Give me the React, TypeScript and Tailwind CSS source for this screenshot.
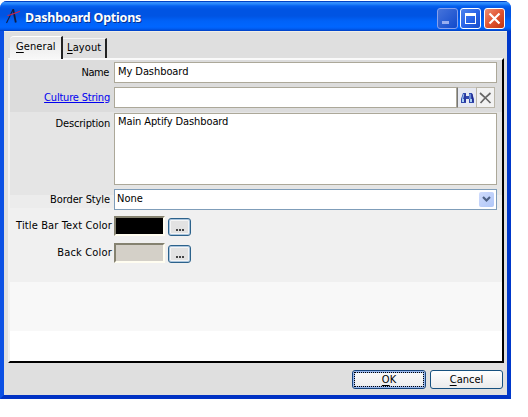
import React, { useState } from "react";

type LabelProps = {
  children: React.ReactNode;
  className?: string;
};

function Label({ children, className = "" }: LabelProps) {
  return (
    <div
      className={`flex w-[104px] shrink-0 justify-end whitespace-nowrap leading-[14px] ${className}`}
    >
      {children}
    </div>
  );
}

type ColorRowProps = {
  label: string;
  swatch: string;
  className: string;
  labelClass: string;
};

function ColorRow({ label, swatch, className, labelClass }: ColorRowProps) {
  return (
    <div className={`flex h-5 ${className}`}>
      <Label className={labelClass}>{label}</Label>
      <div
        className={`h-5 w-[51px] border-2 border-t-[#858270] border-l-[#858270] border-r-[#fffdf0] border-b-[#fffdf0] ${swatch}`}
      />
      <button className="mt-[2px] ml-[3px] flex h-[18px] w-[23px] items-center justify-center rounded-[3px] border border-[#2c628b] bg-[#e2e2e2] shadow-[inset_0_0_0_1px_#a9c4dc,inset_0_0_0_2px_#f4f4f4]">
        <svg width="8" height="2" className="mt-[5px]" shapeRendering="crispEdges">
          <path d="M0 0h2v2H0zM3 0h2v2H3zM6 0h2v2H6z" fill="#444" />
        </svg>
      </button>
    </div>
  );
}

function TitleBar() {
  return (
    <div className="flex h-[30px] shrink-0 items-center rounded-t-[7px] bg-[linear-gradient(#0041c4_0,#0041c4_1px,#3a93ff_1px,#2585fb_3px,#0560ef_5px,#0054e3_8px,#0054e3_15px,#0062f8_20px,#0066ff_26px,#005bee_28px,#003fc4_30px)] pl-[5px]">
      <svg width="17" height="17" viewBox="0 0 17 17" className="mt-px shrink-0">
        <path d="M1.5 15 8 1.5h1" fill="none" stroke="#101d45" strokeWidth="1.1" />
        <path d="M8.2 1.5 10.8 14.5" fill="none" stroke="#101d45" strokeWidth="1.8" />
        <path d="M2.5 7.5C6 7 10 5.5 15 3.3" fill="none" stroke="#d32346" strokeWidth="1.2" />
      </svg>
      <h1 className="mt-[3px] ml-[3px] whitespace-nowrap font-['Noto_Sans','DejaVu_Sans',sans-serif] text-[12.5px] leading-5 font-bold tracking-[-0.22px] text-white [text-shadow:1px_1px_0_#06308e]">
        Dashboard Options
      </h1>
      <div className="mt-[4px] mr-[6px] ml-auto flex gap-[2px]">
        <button aria-label="Minimize" className="h-[21px] w-[21px] rounded-[3px] border border-[#88a1ec] bg-linear-to-br from-[#4573db] to-[#0f49cb]">
          <svg width="19" height="19" shapeRendering="crispEdges">
            <path d="M4 12h7v3H4z" fill="#98aef0" />
          </svg>
        </button>
        <button aria-label="Maximize" className="h-[21px] w-[21px] rounded-[3px] border border-white bg-linear-to-br from-[#5083ec] via-[#2a64e8] to-[#154cca]">
          <svg width="19" height="19" shapeRendering="crispEdges">
            <path d="M4 4h11v11H4zM5 7v7h9V7z" fill="#fff" fillRule="evenodd" />
          </svg>
        </button>
        <button aria-label="Close" className="ml-px h-[21px] w-[21px] rounded-[3px] border border-white bg-linear-to-br from-[#ec8e72] via-[#e25431] to-[#bd3410]">
          <svg width="19" height="19">
            <path d="m4.5 4.5 10 10m0-10-10 10" stroke="#fff" strokeWidth="2.2" />
          </svg>
        </button>
      </div>
    </div>
  );
}

function App() {
  const [tab, setTab] = useState("General");

  return (
    <div className="h-[417px] w-[528px] bg-white pt-px font-['DejaVu_Sans_Condensed','DejaVu_Sans',sans-serif] text-[11px] text-black">
      <div className="flex h-[398px] w-[511px] flex-col rounded-t-[7px] bg-[#0046dc]">
        <TitleBar />
        <div className="flex grow flex-col border-x-4 border-b-4 border-t-0 border-l-[#0b50e4] border-r-[#0038ca] border-b-[#0032c4] bg-[#dfdfdf] pl-1 shadow-[inset_0_1px_0_#f0eee6]">
          <div className="flex h-[27px] items-end pl-[2px]">
            <button
              onClick={() => setTab("General")}
              className="relative -mb-px flex h-[23px] w-[53px] items-start rounded-tl-sm border-t border-r-2 border-t-white border-r-[#222] bg-linear-to-b from-[#e6e6e6] to-[#f8f8f8] pt-[2px] pl-[6px] leading-[15px] tracking-[0.1px]"
            >
              <u className="underline-offset-2">G</u>eneral
            </button>
            <button
              onClick={() => setTab("Layout")}
              className="flex h-5 w-[44px] items-start border-t border-r-2 border-t-[#f5f5f5] border-r-[#222] pt-px pl-[4px] leading-[15px] tracking-[0.1px]"
            >
              <u className="underline-offset-2">L</u>ayout
            </button>
          </div>

          <div
            data-tab={tab}
            className="h-[305px] w-[496px] border-2 border-t-[#fafafa] border-r-black border-b-black border-l-[#f1f1f1] bg-[linear-gradient(#dcdcdc_0,#dcdcdc_52px,#e5e5e5_52px,#e5e5e5_135px,#ececec_135px,#ececec_148px,#f0f0f0_148px,#f0f0f0_222px,#f8f8f8_222px,#f8f8f8_271px,#fff_271px)] pt-[2px]"
          >
            <div className="flex h-[21px]">
              <Label className="pt-[4px] pr-[5px] tracking-[-0.4px]">Name</Label>
              <div className="w-[383px] border border-[#aca899] bg-white pt-[2px] pl-[3px] leading-[14px] tracking-[-0.07px]">
                My Dashboard
              </div>
            </div>

            <div className="mt-1 flex h-[21px]">
              <Label className="pt-[4px] pr-[4px] tracking-[-0.2px]">
                <a className="text-[#0000f0] underline">Culture String</a>
              </Label>
              <div className="w-[343px] border border-[#aca899] bg-white" />
              <button aria-label="Find" className="flex w-[19px] items-center justify-center border-y border-l border-y-[#c7c3b8] border-l-[#777] bg-[#e6e9f2]">
                <svg width="15" height="14" viewBox="0 0 15 14">
                  <path d="M3 2h3v3h3V2h3l2 6v4H9V8H6v4H1V8z" fill="#3048ae" />
                  <path d="M4 3 2.4 8M10 3v5" stroke="#91b9ec" strokeWidth="1.2" />
                  <path d="M2 9.5h2M10 9.5h2" stroke="#a9d1f5" strokeWidth="3" />
                  <path d="M5 3v8M12 3l1 8" stroke="#20248c" />
                </svg>
              </button>
              <button aria-label="Clear" className="flex w-[19px] items-center justify-center border border-[#b9b5a9] bg-[#f2f2f2]">
                <svg width="13" height="12" viewBox="0 0 13 12">
                  <path d="m1 1 4.5 4 6 6M11.5 1 7 5l-5.5 6" fill="none" stroke="#666" strokeWidth="1.7" />
                </svg>
              </button>
            </div>

            <div className="mt-[5px] flex h-[72px]">
              <Label className="pt-[4px] pr-[4px] tracking-[-0.18px]">Description</Label>
              <div className="w-[383px] border border-[#aca899] bg-white pt-px pl-[3px] leading-[14px] tracking-[-0.1px]">
                Main Aptify Dashboard
              </div>
            </div>

            <div className="mt-1 flex h-[21px]">
              <Label className="pt-[4px] pr-[4px] tracking-[-0.1px]">Border Style</Label>
              <div className="flex w-[383px] border border-[#7f9db9] bg-white pr-[2px] pl-[2px] leading-[18px]">
                None
                <span className="mt-[2px] ml-auto flex h-[15px] w-[15px] items-center justify-center rounded-[2px] bg-linear-to-br from-[#d0dcfc] to-[#afc6f8]">
                  <svg width="9" height="7">
                    <path d="m1 1 3.5 3.5L8 1" fill="none" stroke="#4d6185" strokeWidth="2.2" />
                  </svg>
                </span>
              </div>
            </div>

            <ColorRow label="Title Bar Text Color" swatch="bg-black" className="mt-[6px]" labelClass="pt-[3px] pr-[2px] tracking-[0.14px]" />
            <ColorRow label="Back Color" swatch="bg-[#d4d0c8]" className="mt-[7px]" labelClass="pt-[3px] pr-[2px] tracking-[0.18px]" />
          </div>

          <div className="mt-[7px] flex justify-end gap-1 pr-1">
            <button className="h-[19px] w-[74px] rounded-[3px] border border-[#17447b] bg-linear-to-b from-[#fbfbfb] to-[#ececec] p-px shadow-[inset_0_0_0_2px_#9bb9ed]">
              <span className="flex h-full items-center justify-center border border-dotted border-black leading-none">
                <u className="underline-offset-2">O</u>K
              </span>
            </button>
            <button className="flex h-[19px] w-[73px] items-center justify-center rounded-[3px] border border-[#17517f] bg-linear-to-b from-white to-[#ebebeb] leading-none">
              <u className="underline-offset-2">C</u>ancel
            </button>
          </div>
        </div>
      </div>
    </div>
  );
}

export default App;
